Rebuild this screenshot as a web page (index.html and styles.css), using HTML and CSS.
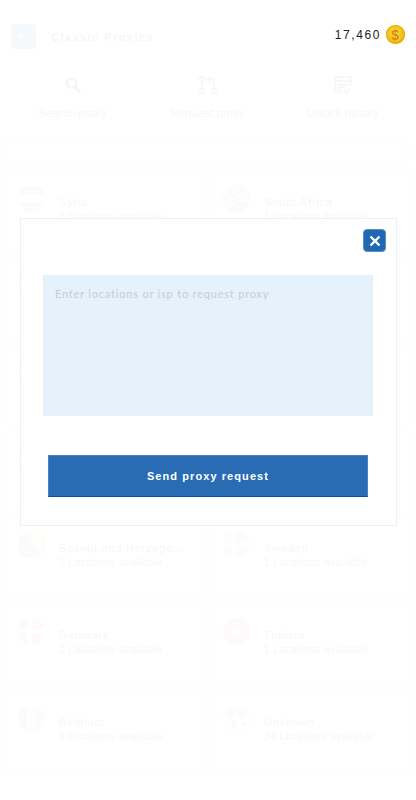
FILE: index.html
```html
<!DOCTYPE html>
<html lang="en">
<head>
  <meta charset="UTF-8" />
  <meta name="viewport" content="width=device-width, initial-scale=1.0"/>
  <title>Classic Proxies</title>
  <link rel="stylesheet" href="styles.css">
</head>
<body>
  <div class="screen">
    <div class="top-bar">
      <div class="title-group faded">
        <button class="back-btn">
          <svg width="11" height="9" viewBox="0 0 11 9"><path d="M10.500 4.500H1M4.500 1 1 4.500 4.500 8" fill="none" stroke="#fff" stroke-width="1.200"/></svg>
        </button>
        <span class="page-title">Classic Proxies</span>
      </div>
      <div class="balance">
        <span class="balance-num">17,460</span>
        <span class="coin"><span class="coin-mark">$</span></span>
      </div>
    </div>

    <div class="faded">
      <div class="tabs">
        <div class="tab">
          <svg width="16" height="18" viewBox="0 0 16 18"><circle cx="6.500" cy="7" r="4.600" fill="none" stroke="#111" stroke-width="2.400"/><path d="M10 11l5 5" stroke="#111" stroke-width="3"/></svg>
          <span>Search proxy</span>
        </div>
        <div class="tab">
          <svg width="18" height="18" viewBox="0 0 18 18" fill="none" stroke="#111" stroke-width="1.400"><circle cx="3" cy="3" r="2.300"/><circle cx="3" cy="15" r="2.300"/><circle cx="15" cy="15" r="2.300"/><path d="M3 5.500v7M15 12.500V6c0-2-1-3-3-3H9M11 .8 8.800 3 11 5.200"/></svg>
          <span>Request proxy</span>
        </div>
        <div class="tab">
          <svg width="18" height="18" viewBox="0 0 18 18" fill="none" stroke="#111" stroke-width="1.300"><path d="M9 16.500H1V1h16v9M1 5h16M3.500 8.500h10M3.500 11.500h8M3.500 14.500h4M10.500 14.500l2 2 4-4"/></svg>
          <span>Unlock history</span>
        </div>
      </div>

      <div class="search-box"></div>

      <div class="country-grid">
        <div class="country">
          <svg class="flag" viewBox="0 0 26 26"><rect width="26" height="9" fill="#ce1126"/><rect y="9" width="26" height="8" fill="#fff"/><rect y="17" width="26" height="9" fill="#222"/><circle cx="8.500" cy="13" r="1.300" fill="#007a3d"/><circle cx="17.500" cy="13" r="1.300" fill="#007a3d"/></svg>
          <div class="country-text"><div class="country-name">Syria</div><div class="country-count">1 Locations available</div></div>
        </div>
        <div class="country">
          <svg class="flag" viewBox="0 0 26 26"><rect width="26" height="13" fill="#de3831"/><rect y="13" width="26" height="13" fill="#002395"/><path d="M0 2 13 13 0 24M13 13h13" fill="none" stroke="#fff" stroke-width="6"/><path d="M0 2 13 13 0 24M13 13h13" fill="none" stroke="#007a4d" stroke-width="3.500"/><path d="M0 7 7 13 0 19z" fill="#222"/></svg>
          <div class="country-text"><div class="country-name">South Africa</div><div class="country-count">1 Locations available</div></div>
        </div>
        <div class="country"><svg class="flag" viewBox="0 0 26 26"><rect width="26" height="26" fill="#888"/></svg></div>
        <div class="country"><svg class="flag" viewBox="0 0 26 26"><rect width="26" height="26" fill="#888"/></svg></div>
        <div class="country"><svg class="flag" viewBox="0 0 26 26"><rect width="26" height="26" fill="#888"/></svg></div>
        <div class="country"><svg class="flag" viewBox="0 0 26 26"><rect width="26" height="26" fill="#888"/></svg></div>
        <div class="country"><svg class="flag" viewBox="0 0 26 26"><rect width="26" height="26" fill="#888"/></svg></div>
        <div class="country"><svg class="flag" viewBox="0 0 26 26"><rect width="26" height="26" fill="#888"/></svg></div>
        <div class="country">
          <svg class="flag" viewBox="0 0 26 26"><rect width="26" height="26" fill="#002395"/><path d="M7 0h17v26z" fill="#fecb00"/><path d="M5 0l20 26" stroke="#fff" stroke-width="1.500" stroke-dasharray="2 2"/></svg>
          <div class="country-text"><div class="country-name">Bosnia and Herzego...</div><div class="country-count">1 Locations available</div></div>
        </div>
        <div class="country">
          <svg class="flag" viewBox="0 0 26 26"><rect width="26" height="26" fill="#006aa7"/><path d="M0 13h26M10 0v26" stroke="#fecc00" stroke-width="5"/></svg>
          <div class="country-text"><div class="country-name">Sweden</div><div class="country-count">1 Locations available</div></div>
        </div>
        <div class="country">
          <svg class="flag" viewBox="0 0 26 26"><rect width="26" height="26" fill="#c8102e"/><path d="M0 13h26M11 0v26" stroke="#fff" stroke-width="4"/></svg>
          <div class="country-text"><div class="country-name">Denmark</div><div class="country-count">1 Locations available</div></div>
        </div>
        <div class="country">
          <svg class="flag" viewBox="0 0 26 26"><rect width="26" height="26" fill="#e70013"/><circle cx="13" cy="13" r="5" fill="#fff"/><circle cx="13.500" cy="13" r="2.800" fill="none" stroke="#e70013" stroke-width="1.200"/></svg>
          <div class="country-text"><div class="country-name">Tunisia</div><div class="country-count">1 Locations available</div></div>
        </div>
        <div class="country">
          <svg class="flag" viewBox="0 0 26 26"><rect width="9" height="26" fill="#222"/><rect x="9" width="8" height="26" fill="#fdda24"/><rect x="17" width="9" height="26" fill="#ef3340"/></svg>
          <div class="country-text"><div class="country-name">Belgium</div><div class="country-count">5 Locations available</div></div>
        </div>
        <div class="country">
          <svg class="flag" viewBox="0 0 26 26"><circle cx="13" cy="13" r="12.500" fill="#fff" stroke="#8fa3c4"/><path d="M3 8l4-4 4 1 1 3-3 3-1 3-2-1zM14 4l6 1 3 5-3 1-1 4-3-3-2-3zM8 14l4 1 1 3-3 5-2-4zM17 17l4-2 1 3-3 3-2-2z" fill="#2a4f8f"/></svg>
          <div class="country-text"><div class="country-name">Unknown</div><div class="country-count">24 Locations available</div></div>
        </div>
      </div>
    </div>

    <div class="request-modal">
      <div class="modal-head">
        <button class="close-btn">
          <svg width="12" height="12" viewBox="0 0 12 12"><path d="M1.500 1.500l9 9M10.500 1.500l-9 9" stroke="#fff" stroke-width="2.400"/></svg>
        </button>
      </div>
      <textarea class="request-input" placeholder="Enter locations or isp to request proxy"></textarea>
      <button class="send-btn">Send proxy request</button>
    </div>
  </div>
</body>
</html>
```

FILE: styles.css
```css
* { box-sizing: border-box; }

body {
  margin: 0;
  background: #fff;
  font-family: "Liberation Sans", Arial, sans-serif;
  color: #111;
}

.screen {
  position: relative;
  width: 416px;
  height: 800px;
  overflow: hidden;
}

/* everything behind the dialog is washed out */
.faded { opacity: 0.035; }

.top-bar {
  display: flex;
  justify-content: space-between;
  align-items: flex-start;
  padding: 24px 11px 0 11px;
  height: 64px;
}

.title-group {
  display: flex;
  align-items: center;
  gap: 15px;
}

.back-btn {
  display: flex;
  align-items: center;
  justify-content: center;
  width: 25px;
  height: 25px;
  padding: 0;
  border: none;
  border-radius: 4px;
  background: #2a6cb3;
}

.page-title {
  font-size: 11px;
  font-weight: bold;
  letter-spacing: 1.450px;
}

.balance {
  display: flex;
  align-items: center;
  gap: 5px;
  margin-top: 1px;
}

.balance-num {
  font-size: 12px;
  letter-spacing: 1.600px;
  color: #222;
}

.coin {
  display: flex;
  align-items: center;
  justify-content: center;
  width: 19px;
  height: 19px;
  border-radius: 50%;
  background: radial-gradient(circle at 45% 40%, #ffd83a 0, #f6bd14 55%, #dd8f06 100%);
  box-shadow: inset 0 0 0 1px #eaa90e;
}

.coin-mark {
  font-size: 14px;
  font-weight: bold;
  line-height: 1;
  color: #cf8c08;
  text-shadow: 1px 0 0 #ffe36a;
}

.tabs {
  display: grid;
  grid-template-columns: repeat(3, 135px);
  margin-left: 5px;
  padding-top: 12px;
  height: 76px;
}

.tab {
  display: flex;
  flex-direction: column;
  align-items: center;
  gap: 13px;
  font-size: 11.500px;
  white-space: nowrap;
}

.search-box {
  height: 23px;
  margin: 0 10px 10px 8px;
  background: #fff;
  box-shadow: 0 0 4px rgba(0, 0, 0, 0.1);
}

.country-grid {
  display: grid;
  grid-template-columns: 195px 195px;
  grid-auto-rows: 78px;
  column-gap: 10px;
  row-gap: 8.600px;
  padding-left: 8px;
}

.country {
  display: flex;
  align-items: flex-start;
  gap: 14px;
  padding: 12px 10px 0;
  background: #fff;
  box-shadow: 0 0 4px rgba(0, 0, 0, 0.1);
}

.flag {
  flex: none;
  width: 27px;
  height: 27px;
  border-radius: 50%;
  opacity: 0.45;
}

.country-text { padding-top: 9px; }

.country-name {
  font-size: 11px;
  letter-spacing: 0.800px;
  line-height: 16px;
  white-space: nowrap;
}

.country-count {
  font-size: 10px;
  letter-spacing: 0.500px;
  line-height: 13px;
  white-space: nowrap;
}

.request-modal {
  position: absolute;
  top: 218px;
  left: 20px;
  width: 377px;
  height: 308px;
  display: flex;
  flex-direction: column;
  align-items: flex-start;
  padding: 10px 22px 0;
  background: #fff;
  border: 1px solid #e6f3fb;
}

.modal-head {
  display: flex;
  justify-content: flex-end;
  width: 100%;
  height: 46px;
}

.close-btn {
  display: flex;
  align-items: center;
  justify-content: center;
  width: 23px;
  height: 23px;
  margin-right: -12px;
  padding: 0;
  border: 1px solid #5b8fc8;
  border-radius: 4px;
  background: #2168b4;
}

.request-input {
  display: block;
  width: 330px;
  height: 141px;
  padding: 12px;
  border: none;
  border-radius: 0;
  outline: none;
  resize: none;
  background: #e5f2fb;
  font-family: Lato, sans-serif;
  font-size: 11px;
  letter-spacing: 0.800px;
}

.request-input::placeholder { color: #c2cdd5; opacity: 1; }

.send-btn {
  width: 320px;
  height: 42px;
  margin: 39px 0 0 5px;
  padding: 0;
  border: 1px solid #4a82bf;
  border-bottom: 1px solid #0b4da3;
  background: #2a6cb3;
  color: #fff;
  font-family: "Liberation Sans", Arial, sans-serif;
  font-size: 11px;
  font-weight: bold;
  letter-spacing: 1.080px;
}
```
